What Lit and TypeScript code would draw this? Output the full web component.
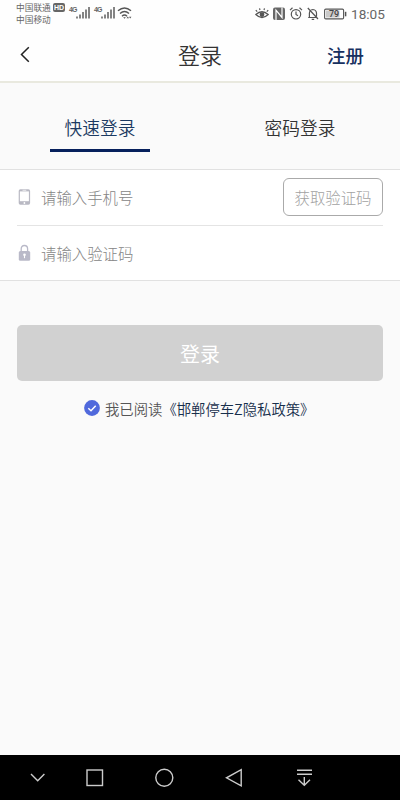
import { LitElement, html, css, svg } from "lit";
import { customElement, property } from "lit/decorators.js";

const signal = svg`<path d="M1 12.5V10.5M4 12.5V8.5M7 12.5V6M10 12.5V3.5M13 12.5V1" stroke="#666" stroke-width="1.6"/>`;

@customElement("status-bar")
class StatusBar extends LitElement {
  static styles = css`
    :host { display: flex; height: 28px; justify-content: space-between; color: #666; }
    .left, .right { display: flex; align-items: flex-start; }
    .left { padding-left: 16px; }
    .right { padding-right: 16px; }
    .carrier { font-size: 8.7px; line-height: 12px; padding-top: 2px; width: 37px; white-space: nowrap; }
    .hd { margin-top: 3px; width: 12px; height: 9px; border-radius: 2px; background: #666; color: #fff; font: bold 7px/9px "Liberation Sans", sans-serif; text-align: center; }
    .gen { font: bold 7px/8px "Liberation Sans", sans-serif; letter-spacing: -1px; margin: 6px 0 0 4px; width: 7px; }
    .bars { margin-top: 6px; }
    .wifi { margin: 6px 0 0 2px; }
    .glyphs { margin-top: 6px; }
    .time { font: 13.6px/16px Roboto, sans-serif; margin: 6px 0 0 4px; width: 33px; white-space: nowrap; }
    svg { display: block; fill: none; flex: none; }
  `;
  render() {
    return html`
      <div class="left">
        <div class="carrier"><div>中国联通</div><div>中国移动</div></div>
        <div class="hd">HD</div>
        <div class="gen">4G</div>
        <svg class="bars" width="14" height="14">${signal}</svg>
        <div class="gen">4G</div>
        <svg class="bars" width="14" height="14">${signal}</svg>
        <svg class="wifi" width="16" height="14" stroke="#555" stroke-width="1.4">
          <path d="M1 4.8Q7.5 -1 14 4.8M3 7.6Q7.5 3.6 12 7.6M5 10.3Q7.5 7.8 10 10.3"/>
          <path d="M6.2 11.3L7.5 12.8L8.8 11.3Z" fill="#555" stroke="none"/>
          <path d="M9.6 12.3L10.8 10.6L12 12.3ZM12 10.8L13.2 12.6L14.4 10.8Z" fill="#555" stroke="none"/>
        </svg>
      </div>
      <div class="right">
        <svg class="glyphs" width="92" height="16" stroke="#555" stroke-width="1.2">
          <path d="M.8 8.5Q7 3 13.2 8.5Q7 14.5.8 8.5ZM2.2 5.6L.8 4.1M5 4L4.5 2.3M9 4L9.5 2.3M11.8 5.6L13.2 4.1"/>
          <circle cx="7" cy="8.6" r="1.8" fill="#555"/>
          <rect x="18" y="1.5" width="12" height="12.5" rx="2" fill="#666" stroke="none"/>
          <path d="M21 14V4.2L27 11.5V1.5" stroke="#fff" stroke-width="1.2"/>
          <circle cx="41" cy="8.3" r="4.7"/>
          <path d="M41 5.6V8.5L43 9.8M35 4.1L37.5 1.8M44.5 1.8L47 4.1"/>
          <path d="M53.2 11.5H62.4M54.4 11.5V7.3Q54.4 4 57.9 3.5Q61.5 4 61.5 7.3V10.5M56.7 13.3H59.2M52.8 2L63 13"/>
          <rect x="69.6" y="3.1" width="19" height="9.8" rx="1.2" stroke-width="1.1"/>
          <rect x="71" y="4.5" width="13.5" height="7" fill="#c9c9c9" stroke="none"/>
          <path d="M90.6 5.8V10.3" stroke-width="1.5"/>
          <text x="79" y="11.3" text-anchor="middle" fill="#444" stroke="none" font-size="9" font-weight="500" font-family="Roboto">79</text>
        </svg>
        <div class="time">18:05</div>
      </div>`;
  }
}

@customElement("form-row")
class FormRow extends LitElement {
  @property() icon = "phone";
  @property() hint = "";
  static styles = css`
    :host { display: flex; box-sizing: border-box; align-items: center; height: 55px; padding-bottom: 2px; margin: 0 17px; font-size: 15.4px; color: #858585; }
    svg { flex: none; width: 15px; height: 18px; margin-right: 9px; }
    .hint { flex: 1; font-weight: 300; }
  `;
  render() {
    return html`
      <svg viewBox="0 0 15 18">
        ${this.icon === "phone"
          ? svg`<rect x="1.7" y="1.2" width="11.4" height="15.6" rx="1.7" fill="#b9b9c3"/><rect x="2.9" y="3.4" width="9" height="9.8" fill="#fff"/><path d="M5.5 2.3H9.3" stroke="#fff" stroke-width=".7"/><circle cx="7.4" cy="15" r=".9" fill="#fff"/>`
          : svg`<path d="M4.2 8V5Q4.2 1.5 7.4 1.5Q10.6 1.5 10.6 5V7" fill="none" stroke="#b9b9c8" stroke-width="1.3"/><rect x="1.8" y="7" width="11.4" height="9.8" rx="1.5" fill="#b9b9c8"/><circle cx="7.5" cy="10.7" r="1.3" fill="#fff"/><path d="M7.5 11V14.2" stroke="#fff" stroke-width="1.1"/>`}
      </svg>
      <span class="hint">${this.hint}</span>
      <slot></slot>`;
  }
}

@customElement("app-root")
class AppRoot extends LitElement {
  static styles = css`
    :host { display: flex; flex-direction: column; width: 400px; height: 800px; background: #fafafa; font-family: "Noto Sans CJK SC", sans-serif; color: #333; }
    .top { background: #fefefe; height: 81px; border-bottom: 2px solid #e9e9df; flex: none; }
    .head { display: grid; grid-template-columns: 100px 1fr 100px; height: 53px; align-items: center; text-align: center; line-height: 30px; }
    .back { margin-left: 18px; display: block; }
    .title { font-size: 22px; font-weight: 350; padding-bottom: 2px; }
    .register { font-size: 18.4px; font-weight: 500; color: #17305f; text-align: left; padding-left: 27px; }
    .tabs { display: flex; height: 86px; flex: none; border-bottom: 1px solid #e1e1e1; }
    .tab { flex: 1; display: flex; flex-direction: column; align-items: center; font-size: 17.7px; font-weight: 350; line-height: 26px; padding-top: 31px; }
    .tab.active { color: #1c3a62; }
    .tab.active::after { content: ""; width: 100px; height: 3px; margin-top: 9px; background: #06205c; }
    .form { background: #fff; border-bottom: 1px solid #e1e1e1; height: 110px; flex: none; }
    .rule { height: 1px; background: #e4e4e4; margin: 0 17px; }
    .code { box-sizing: border-box; width: 100px; height: 38px; border: 1px solid #aaa; border-radius: 6px; color: #a2a2a2; text-align: center; line-height: 36px; white-space: nowrap; font-weight: 300; }
    .submit { margin: 44px 17px 0; height: 56px; flex: none; border-radius: 5px; background: #d1d1d1; color: #fff; font-size: 20px; line-height: 58px; text-align: center; }
    .agree { display: flex; align-items: center; height: 20px; margin: 17px 0 0 84px; font-size: 14.35px; font-weight: 350; line-height: 18px; color: #555; white-space: nowrap; }
    .agree svg { margin-right: 5px; }
    .agree span { padding-top: 1px; }
    .policy { color: #172f4c; }
    .space { flex: 1; }
    .nav { height: 45px; background: #000; flex: none; }
    .nav svg { display: block; }
  `;
  render() {
    return html`
      <div class="top">
        <status-bar></status-bar>
        <div class="head">
          <svg class="back" width="14" height="18" fill="none" stroke="#222" stroke-width="1.5"><path d="M10.8 1.3L3.5 8.5L10.8 15.7"/></svg>
          <div class="title">登录</div>
          <div class="register">注册</div>
        </div>
      </div>
      <div class="tabs">
        <div class="tab active">快速登录</div>
        <div class="tab">密码登录</div>
      </div>
      <div class="form">
        <form-row icon="phone" hint="请输入手机号"><div class="code">获取验证码</div></form-row>
        <div class="rule"></div>
        <form-row icon="lock" hint="请输入验证码"></form-row>
      </div>
      <div class="submit">登录</div>
      <div class="agree">
        <svg width="16" height="16"><circle cx="8" cy="8" r="7.9" fill="#5069dc"/><path d="M4.3 8.2L7 10.7L11.7 5.8" fill="none" stroke="#fff" stroke-width="1.5"/></svg>
        <span>我已阅读</span><span class="policy">《邯郸停车Z隐私政策》</span>
      </div>
      <div class="space"></div>
      <div class="nav">
        <svg width="400" height="45" fill="none" stroke="#ccc" stroke-width="1.4">
          <path d="M31 19L37.7 25.7L44.4 19"/>
          <rect x="87" y="15" width="15.5" height="15.5"/>
          <circle cx="164.3" cy="22.8" r="8.5"/>
          <path d="M241.2 14.7V30.8L226.5 22.8Z"/>
          <path d="M297 15.2H312M297 19.2H312M304.3 22V30M298.5 24.8L304.3 30.2L310 24.8"/>
        </svg>
      </div>`;
  }
}
